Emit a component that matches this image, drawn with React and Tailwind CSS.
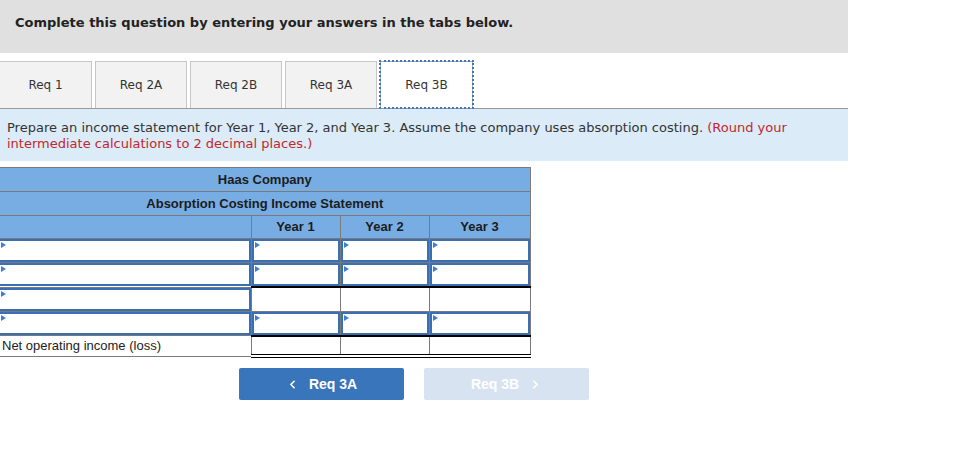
import React from 'react';
import { ChevronLeft, ChevronRight } from 'lucide-react';

const tabs = ['Req 1', 'Req 2A', 'Req 2B', 'Req 3A', 'Req 3B'];

// which year cells hold an input, and which get a rule under them
const rows = [
  { input: true, rule: '' },
  { input: true, rule: 'single' },
  { input: false, rule: '' },
  { input: true, rule: 'single' },
];

const Marker = () => (
  <span className="absolute left-[1px] top-[1px] w-0 h-0 border-y-[3px] border-y-transparent border-l-[5px] border-l-[#3d7fd0]" />
);

const InputBox = ({ marker = true }) => (
  <div className="relative h-[23px] border-2 border-[#3a70b3] bg-white">
    {marker && <Marker />}
  </div>
);

const ruleClass = {
  '': '',
  single: 'border-b-2 border-b-black',
  double: 'border-b-4 border-double border-b-black',
};

export default function App() {
  return (
    <div className="w-[955px] h-[461px] bg-white font-['DejaVu_Sans',Verdana,sans-serif] text-[#333]">
      {/* Question header */}
      <div className="w-[848px] h-[53px] bg-[#e0e0e0] pl-[15px] pt-[13px] text-[13px] font-bold text-[#222]">
        Complete this question by entering your answers in the tabs below.
      </div>

      {/* Tabs */}
      <div className="mt-[8px] flex gap-[3px] h-[47px]">
        {tabs.map((t, i) => {
          const active = i === tabs.length - 1;
          return (
            <div
              key={t}
              className={`flex items-center justify-center text-[12px] text-[#333] border border-b-0 ${
                active
                  ? 'w-[93px] bg-white border-[#aaa] outline-2 outline-dotted outline-[#3b78c4] -outline-offset-1 relative z-10'
                  : 'w-[92px] bg-[#f2f2f2] border-[#c6c6c6]'
              } ${i === 0 ? 'w-[91px] border-l-0' : ''}`}
            >
              {t}
            </div>
          );
        })}
      </div>

      {/* Instructions */}
      <div className="w-[848px] h-[53px] border-t border-[#999] bg-[#dbebf8] px-[7px] pt-[11px] text-[13px] leading-[16px] text-[#333]">
        Prepare an income statement for Year 1, Year 2, and Year 3. Assume the company uses absorption costing.{' '}
        <span className="text-[#c1272d]">(Round your intermediate calculations to 2 decimal places.)</span>
      </div>

      {/* Statement */}
      <table className="mt-[6px] w-[530px] table-fixed border-collapse font-['Liberation_Sans',Arial,sans-serif] text-[13px]">
        <colgroup>
          <col className="w-[251px]" />
          <col className="w-[89px]" />
          <col className="w-[89px]" />
          <col className="w-[101px]" />
        </colgroup>
        <thead className="bg-[#78ade3] text-[#1c1c1c] font-bold">
          <tr className="h-[24px]">
            <th colSpan={4} className="border border-[#7a7a7a] border-l-0 font-bold">Haas Company</th>
          </tr>
          <tr className="h-[24px]">
            <th colSpan={4} className="border border-[#7a7a7a] border-l-0 font-bold">Absorption Costing Income Statement</th>
          </tr>
          <tr className="h-[23px]">
            <th className="border border-[#7a7a7a] border-l-0" />
            <th className="border border-[#7a7a7a] font-bold">Year 1</th>
            <th className="border border-[#7a7a7a] font-bold">Year 2</th>
            <th className="border border-[#7a7a7a] font-bold">Year 3</th>
          </tr>
        </thead>
        <tbody>
          {rows.map((r, i) => (
            <tr key={i}>
              <td className="p-0 border border-[#7a7a7a] border-l-0">
                <div className="-ml-[2px]">
                  <InputBox />
                </div>
              </td>
              {[0, 1, 2].map((c) => (
                <td key={c} className={`p-0 h-[23px] border border-[#7a7a7a] ${ruleClass[r.rule]}`}>
                  {r.input ? <InputBox /> : null}
                </td>
              ))}
            </tr>
          ))}
          <tr className="h-[20px]">
            <td className="border border-[#7a7a7a] border-l-0 pl-[2px] text-[#222]">Net operating income (loss)</td>
            {[0, 1, 2].map((c) => (
              <td key={c} className={`border border-[#7a7a7a] ${ruleClass.double}`} />
            ))}
          </tr>
        </tbody>
      </table>

      {/* Navigation */}
      <div className="mt-[10px] ml-[239px] flex gap-[20px] font-['Liberation_Sans',Arial,sans-serif] text-[14px] font-bold text-white">
        <button className="w-[165px] h-[32px] rounded-[2px] bg-[#3875ba] flex items-center justify-center gap-[10px]">
          <ChevronLeft className="w-[13px] h-[13px]" strokeWidth={3} />
          Req 3A
        </button>
        <button className="w-[165px] h-[32px] rounded-[2px] bg-[#d7e3f1] flex items-center justify-center gap-[10px]">
          Req 3B
          <ChevronRight className="w-[13px] h-[13px]" strokeWidth={3} />
        </button>
      </div>
    </div>
  );
}
